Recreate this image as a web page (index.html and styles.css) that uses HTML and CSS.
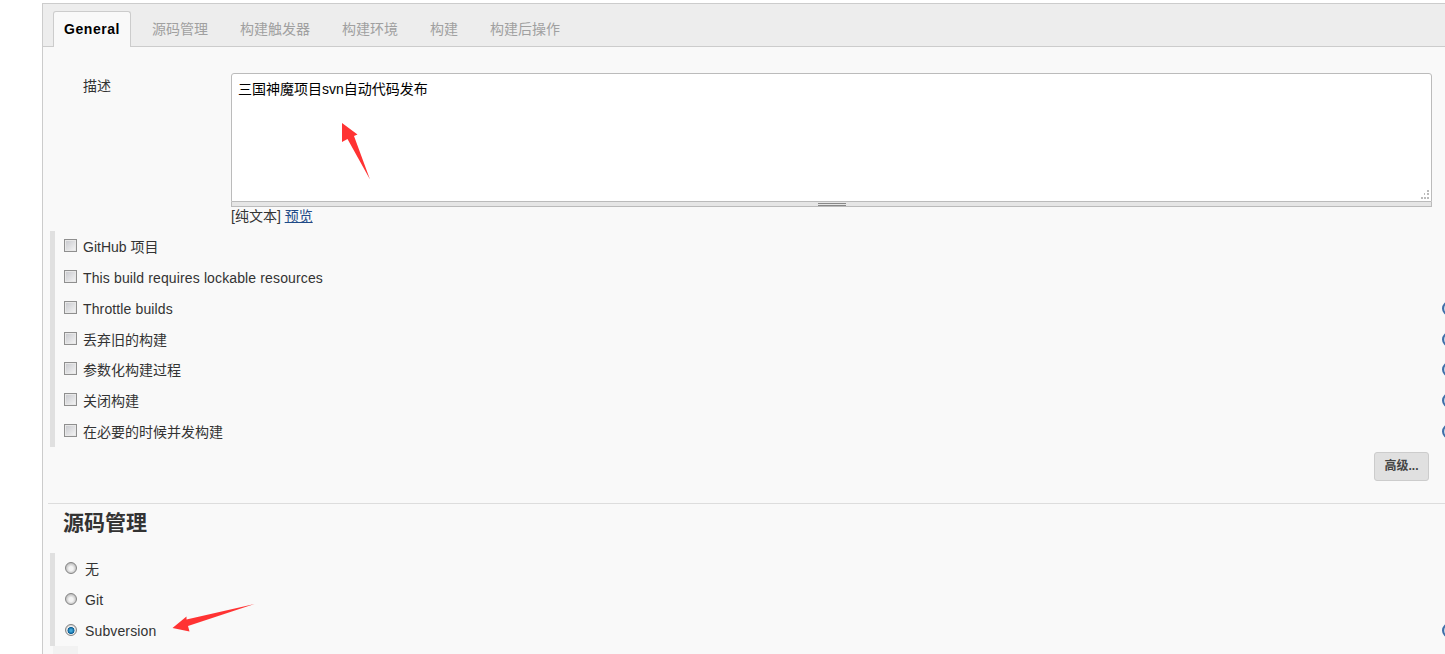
FILE: index.html
```html
<!DOCTYPE html>
<html lang="zh">
<head>
<meta charset="utf-8">
<title>General</title>
<link rel="stylesheet" href="styles.css">
</head>
<body>
<main class="config">
  <nav class="tabs">
    <a class="tab active">General</a>
    <a class="tab">源码管理</a>
    <a class="tab">构建触发器</a>
    <a class="tab">构建环境</a>
    <a class="tab">构建</a>
    <a class="tab">构建后操作</a>
  </nav>
  <section class="desc">
    <label class="desc-label">描述</label>
    <div class="desc-field">
      <div class="textarea">三国神魔项目svn自动代码发布<svg class="grip" width="9" height="9" viewBox="0 0 9 9"><path d="M7 0h2v2H7zM4 3h1v2H4zM7 3h2v2H7zM1 7h2v2H1zM4 7h2v2H4zM7 7h2v2H7z" fill="#bbb"/></svg></div>
      <div class="handle"><span class="handle-mark"></span></div>
      <div class="format">[纯文本] <a href="#">预览</a></div>
    </div>
  </section>
  <section class="options checks">
    <div class="opt"><span class="check"></span><span>GitHub 项目</span></div>
    <div class="opt"><span class="check"></span><span class="en">This build requires lockable resources</span></div>
    <div class="opt"><span class="check"></span><span class="en">Throttle builds</span><i class="help"></i></div>
    <div class="opt"><span class="check"></span><span>丢弃旧的构建</span><i class="help"></i></div>
    <div class="opt"><span class="check"></span><span>参数化构建过程</span><i class="help"></i></div>
    <div class="opt"><span class="check"></span><span>关闭构建</span><i class="help"></i></div>
    <div class="opt"><span class="check"></span><span>在必要的时候并发构建</span><i class="help"></i></div>
  </section>
  <div class="adv"><button class="btn">高级...</button></div>
  <h2 class="section-title">源码管理</h2>
  <section class="options radios">
    <div class="opt"><span class="radio"></span><span>无</span></div>
    <div class="opt"><span class="radio"></span><span class="en">Git</span></div>
    <div class="opt"><span class="radio on"></span><span class="en">Subversion</span><i class="help"></i></div>
  </section>
  <div class="sub-stub"></div>
</main>
<svg class="arrows" width="1445" height="654" viewBox="0 0 1445 654">
  <path fill="#ff3333" d="M342 123L357.500 134.500L354 136L370 179.500L347.500 139L342 142Z"/>
  <path fill="#ff3333" d="M254.500 604L188 626L189.500 631.500L172.500 628L186.500 616.500L186.500 619.500Z"/>
</svg>
</body>
</html>
```
FILE: styles.css
```css
* { box-sizing: border-box; }
html, body { margin: 0; height: 654px; overflow: hidden; background: #fff; }
body { font-family: "Liberation Sans", "Noto Sans CJK SC", sans-serif; font-size: 14px; line-height: 18px; color: #333; padding: 3px 0 0 42px; }
.config { border-left: 1px solid #ccc; border-top: 1px solid #ccc; background: #f9f9f9; height: 651px; width: 1403px; overflow: hidden; }
.tabs { display: flex; height: 43px; background: #ededed; border-bottom: 1px solid #ccc; padding: 7px 0 0 10px; }
.tab { padding: 9px 16px 0; color: #a0a0a0; }
.tab.active { width: 78px; background: #f9f9f9; color: #000; font-weight: bold; letter-spacing: 0.55px; border: 1px solid #ccc; border-bottom: 0; border-radius: 3px 3px 0 0; height: 36px; margin-right: 5px; padding: 8px 0 0 10px; }
.desc { display: flex; padding: 26px 0 0 40px; height: 184px; }
.desc-label { width: 148px; padding-top: 4px; }
.desc-field { width: 1201px; }
.textarea { position: relative; height: 129px; background: #fff; border: 1px solid #bbb; border-radius: 3px 3px 0 0; padding: 6px 6px; color: #000; }
.grip { position: absolute; right: 2px; bottom: 2px; }
.handle { height: 5px; background: #e6e6e6; border: 1px solid #bbb; border-top: 0; display: flex; justify-content: center; }
.handle-mark { width: 28px; height: 3px; margin-top: 1px; border-top: 1px solid #888; border-bottom: 1px solid #888; }
.format { margin-top: 0; }
.format a { color: #204a87; text-decoration: underline; }
.en { letter-spacing: 0.13px; }
.options { margin-left: 7px; border-left: 5px solid #e0e0e0; display: grid; }
.checks { height: 216px; grid-template-rows: repeat(7, 1fr); }
.opt { position: relative; display: flex; padding: 7px 0 0 28px; }
.check { position: absolute; left: 9px; top: 8px; width: 13px; height: 13px; border: 1px solid #8f8f8f; background: linear-gradient(135deg, #c6c7cc, #f6f6f6); box-shadow: inset 0 0 0 1px #e8e8e8; }
.radio { position: absolute; left: 10px; top: 9px; width: 12px; height: 12px; border-radius: 50%; border: 1px solid #858585; background: radial-gradient(circle at 50% 55%, #f4f4f4 0 2px, #b4b4b4 6px); }
.radio.on { background: radial-gradient(circle at 50% 55%, #3fa6d8 0 1px, #0a5d94 3.200px, #f0f0f0 3.800px, #c8c8c8 6px); }
.help { position: absolute; left: 1387px; top: 8px; width: 15px; height: 15px; border-radius: 50%; border: 2px solid #3f6fa8; background: #c9d9ea; }
.adv { display: flex; justify-content: flex-end; padding: 5px 16px 0 0; height: 56px; }
.btn { width: 55px; height: 29px; padding: 0 0 1px; background: #e0e0e0; border: 1px solid #ccc; border-radius: 3px; font: inherit; font-size: 12px; font-weight: bold; color: #444; }
.section-title { margin: 0 0 0 5px; height: 50px; border-top: 1px solid #ddd; font-size: 21px; line-height: 38px; padding: 0 0 0 15px; color: #333; font-weight: bold; }
.radios { height: 93px; grid-template-rows: repeat(3, 1fr); }
.radios .opt { padding-left: 30px; }
.sub-stub { margin: 0 0 0 10px; width: 25px; height: 10px; background: #f2f2f2; }
.arrows { position: absolute; left: 0; top: 0; pointer-events: none; }
```
